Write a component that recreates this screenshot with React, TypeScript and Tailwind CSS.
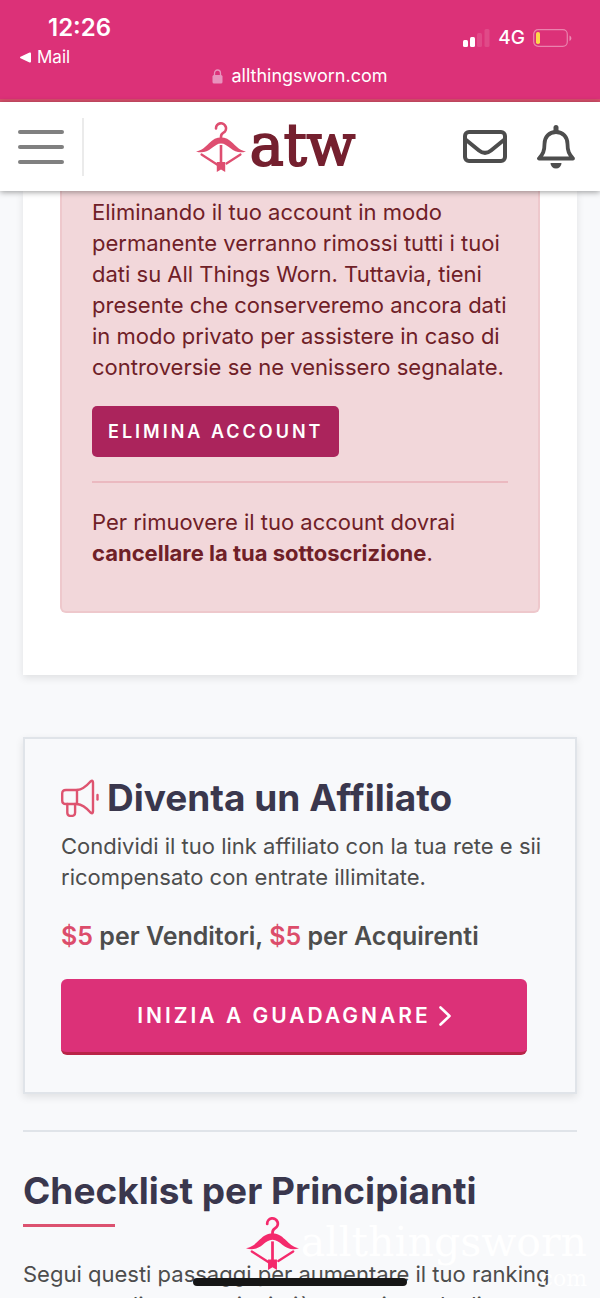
import type { ReactNode } from 'react';

function BowLogo({ className }: { className?: string }) {
  return (
    <svg viewBox="0 0 50 50" className={className} fill="none" stroke="currentColor" aria-hidden="true">
      <path d="M20 6.5a5 5 0 1 1 7.2 4.3c-1.6.8-2.2 1.6-2.2 4.2v3" strokeWidth="2.6" strokeLinecap="round" />
      <path
        d="M0 29.5c6-1.2 9-4.2 13-8.2C17 17.2 20.5 15.5 25 15.5s8 1.7 12 5.8c4 4 7 7 13 8.2-6.500 2-11 .2-15.500-3.200C31 23.600 28.500 21.500 25 21.500s-6 2.100-9.500 4.800C11 29.700 6.500 31.500 0 29.500z"
        fill="currentColor"
        stroke="none"
      />
      <path d="M25 23v20" strokeWidth="2.6" />
      <path d="M5.5 32.5 21 42.5M44.5 32.5 30.5 41.5" strokeWidth="2.2" strokeLinecap="round" />
      <path d="M20.8 40h8.4v10L25 47.5 20.8 50z" fill="currentColor" stroke="none" />
    </svg>
  );
}

function StatusBar() {
  return (
    <div className="bg-[#dc3178] border-b-3 border-[#d9506c] text-white px-5 pt-[13px] pb-[11px]">
      <div className="flex justify-between">
        <div>
          <div className="pl-7 text-2xl leading-[30px] font-semibold">12:26</div>
          <a href="#mail" className="flex items-center gap-[6px] text-[17px] leading-[29px]">
            <svg viewBox="0 0 11 11" className="w-[11px] h-[11px]" fill="currentColor" aria-hidden="true">
              <path d="M.5 4.8 9.6.6Q11 .2 11 1.5v8q0 1.3-1.4.9L.5 6.2Q-.5 5.5.5 4.8z" />
            </svg>
            Mail
          </a>
        </div>
        <div className="flex items-center h-[26px] mt-3 mr-2 gap-2 text-[19px] font-medium">
          <svg viewBox="0 0 27 18" className="w-[27px] h-[18px]" fill="currentColor" aria-hidden="true">
            <rect x="0" y="11" width="5" height="7" rx="1.5" />
            <rect x="7" y="8" width="5" height="10" rx="1.5" />
            <rect x="14" y="4" width="5" height="14" rx="1.5" opacity=".12" />
            <rect x="21.5" y="0" width="5" height="18" rx="1.5" opacity=".12" />
          </svg>
          4G
          <svg viewBox="0 0 39 18" className="w-[39px] h-[18px]" aria-hidden="true">
            <rect x=".7" y=".7" width="33.6" height="16.6" rx="4.5" fill="none" stroke="#fff" strokeOpacity=".4" strokeWidth="1.2" />
            <rect x="3" y="3" width="4" height="12" rx="1.8" fill="#fdd84a" />
            <path d="M36.5 6.5c2.5 1 2.5 4.5 0 5.5z" fill="#fff" opacity=".45" />
          </svg>
        </div>
      </div>
      <div className="flex justify-center items-center gap-2 text-[18px] leading-6 -mt-2">
        <svg viewBox="0 0 11 15" className="w-[11px] h-[15px] text-[#e893bd]" aria-hidden="true">
          <path d="M2.5 7V4.5a3 3.5 0 0 1 6 0V7" fill="none" stroke="currentColor" strokeWidth="1.3" />
          <rect x=".5" y="6" width="10" height="8.5" rx="1.5" fill="currentColor" />
        </svg>
        allthingsworn.com
      </div>
    </div>
  );
}

function Header() {
  return (
    <header className="relative z-10 flex items-center justify-between h-[89px] px-[18px] bg-white shadow-[0_1px_6px_rgba(0,0,0,0.4)]">
      <div className="flex items-center">
        <button type="button" aria-label="Menu" className="flex flex-col gap-[11px]">
          <span className="block w-[46px] h-1 rounded-full bg-[#808080]" />
          <span className="block w-[46px] h-1 rounded-full bg-[#808080]" />
          <span className="block w-[46px] h-1 rounded-full bg-[#808080]" />
        </button>
        <span className="ml-[18px] w-[2px] h-[58px] bg-[#ebebeb]" />
      </div>
      <a href="#home" className="flex items-center gap-1 ml-1">
        <BowLogo className="w-[50px] h-[50px] text-[#de4e70]" />
        <span className="pb-1 font-['DejaVu_Serif',serif] text-[57px] leading-[60px] text-[#75202f] [-webkit-text-stroke:2px_#75202f]">
          atw
        </span>
      </a>
      <div className="flex items-center gap-[30px] mr-[7px] text-[#4d4d4d]">
        <a href="#messages" aria-label="Messaggi">
          <svg viewBox="0 0 44 33" className="w-11 h-[33px]" fill="none" stroke="currentColor" strokeWidth="4" aria-hidden="true">
            <rect x="2" y="2" width="40" height="29" rx="4" />
            <path d="M2.5 9.5 16 20.5c4 3.200 8 3.200 12 0L41.500 9.500" />
          </svg>
        </a>
        <a href="#notifications" aria-label="Notifiche">
          <svg viewBox="0 0 38 44" className="w-[38px] h-11" fill="none" stroke="currentColor" aria-hidden="true">
            <path d="M19 2.5V6" strokeWidth="5" strokeLinecap="round" />
            <path
              d="M19 7C12 7 7.5 12 7.5 19c0 7-1.5 10-5.5 14.5h34C32 29 30.5 26 30.5 19 30.5 12 26 7 19 7z"
              strokeWidth="3.8"
              strokeLinejoin="round"
            />
            <path d="M13.5 38h11a5.5 5.5 0 0 1-11 0z" fill="currentColor" stroke="none" />
          </svg>
        </a>
      </div>
    </header>
  );
}

function Price({ children }: { children: ReactNode }) {
  return <span className="text-[#dc4d6b]">{children}</span>;
}

export default function App() {
  return (
    <div className="relative h-screen flex flex-col overflow-hidden bg-[#f8f9fb] font-['Inter',sans-serif] text-[#4d4d4d]">
      <StatusBar />
      <Header />

      <main className="flex-1 min-h-0 overflow-hidden px-[23px] text-[22px] leading-[31px]">
        {/* Elimina account */}
        <section className="bg-white px-[37px] pb-[62px] shadow-[0_3px_8px_rgba(0,0,0,0.1)]">
          <div className="bg-[#f2d7da] border-x-2 border-b-2 border-[#eec8cc] rounded-b-md px-[30px] pt-[6px] pb-[42px] text-[#6f2027]">
            <p>
              Eliminando il tuo account in modo permanente verranno rimossi tutti i tuoi dati su All Things Worn.
              Tuttavia, tieni presente che conserveremo ancora dati in modo privato per assistere in caso di
              controversie se ne venissero segnalate.
            </p>
            <button
              type="button"
              className="block mt-[23px] h-[51px] px-4 rounded-[5px] bg-[#ab245c] text-white text-[18px] font-semibold tracking-[3px]"
            >
              ELIMINA ACCOUNT
            </button>
            <hr className="my-6 border-t-2 border-[#ebb9c0]" />
            <p>
              Per rimuovere il tuo account dovrai <a href="#subscription" className="font-bold">cancellare la tua sottoscrizione</a>.
            </p>
          </div>
        </section>

        {/* Affiliati */}
        <section className="mt-[62px] border-2 border-[#e0e4e9] pl-9 pr-6 pt-9 pb-[37px] shadow-[0_3px_8px_rgba(0,0,0,0.1)]">
          <h2 className="flex items-center gap-2 text-[37px] leading-[46px] font-bold text-[#3a374d]">
            <svg
              viewBox="0 0 38 38"
              className="w-[38px] h-[38px] text-[#de5470]"
              fill="none"
              stroke="currentColor"
              strokeWidth="2.4"
              strokeLinecap="round"
              strokeLinejoin="round"
              aria-hidden="true"
            >
              <path d="M16 11H5Q1.2 11 1.2 14.5v7Q1.2 25 5 25h11z" />
              <path d="M16 11c6-.5 10-4.5 13.5-8.5Q32 .5 32 3.5v29q0 3-2.5 1C26 29.5 22 25.5 16 25" />
              <path d="M6.3 25v8.5q0 3.5 3.9 3.5t3.9-3.5V25" />
              <path d="M36.5 16v4.5" />
            </svg>
            Diventa un Affiliato
          </h2>
          <p className="mt-[10px]">Condividi il tuo link affiliato con la tua rete e sii ricompensato con entrate illimitate.</p>
          <p className="mt-7 text-[25px] leading-[31px] font-semibold">
            <Price>$5</Price> per Venditori, <Price>$5</Price> per Acquirenti
          </p>
          <div className="mt-[27px] pr-6">
            <a
              href="#affiliate"
              className="flex items-center justify-center gap-2 h-[76px] rounded-md border-b-3 border-[#b92448] bg-[#dc3178] text-white text-[21px] font-semibold tracking-[3px]"
            >
              INIZIA A GUADAGNARE
              <svg viewBox="0 0 12 20" className="w-3 h-5" fill="none" stroke="currentColor" strokeWidth="2.6" strokeLinecap="round" strokeLinejoin="round" aria-hidden="true">
                <path d="M1.5 1.5 10.5 10l-9 8.5" />
              </svg>
            </a>
          </div>
        </section>

        <hr className="mt-9 border-t-2 border-[#e0e4e9]" />

        {/* Checklist */}
        <section className="mt-9">
          <h2 className="text-[37px] leading-[46px] font-bold text-[#3a374d]">Checklist per Principianti</h2>
          <div className="mt-[10px] w-[92px] h-[3px] bg-[#dc5270]" />
          <p className="mt-8">
            Segui questi passaggi per aumentare il tuo ranking come venditore e ottieni più attenzione dagli
          </p>
        </section>
      </main>

      {/* watermark */}
      <div className="absolute right-[13px] bottom-[7px] flex items-start gap-[2px] text-white font-['DejaVu_Serif',serif]">
        <BowLogo className="w-[53px] h-[53px] text-[#f42a6c]" />
        <div className="text-right">
          <div className="text-[41px] leading-[50px]">allthingsworn</div>
          <div className="text-[22px] leading-6">.com</div>
        </div>
      </div>

      {/* home indicator */}
      <div className="absolute bottom-3 left-1/2 -translate-x-1/2 w-[214px] h-2 rounded-full bg-[#161616]" />
    </div>
  );
}
